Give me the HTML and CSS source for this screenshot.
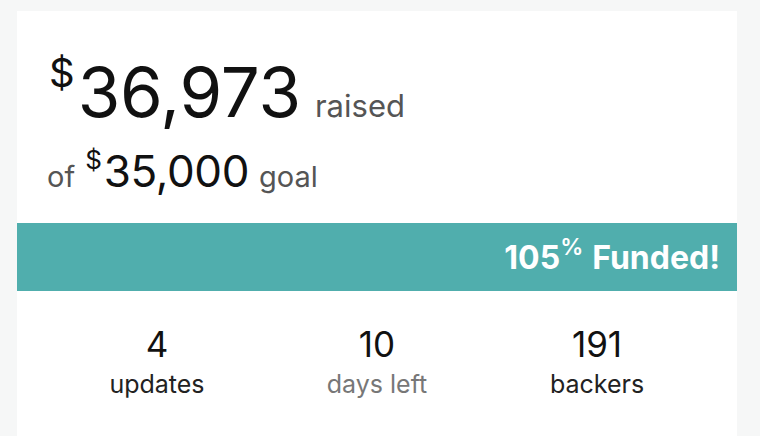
FILE: index.html
```html
<!DOCTYPE html>
<html>
<head>
<meta charset="utf-8">
<link rel="stylesheet" href="styles.css">
</head>
<body>
<div class="card">
  <div class="amounts">
    <div class="raised-line">
      <span class="cur-big">$</span><span class="big">36,973</span><span class="word-big">raised</span>
    </div>
    <div class="goal-line">
      <span class="word">of</span><span class="cur-small">$</span><span class="mid">35,000</span><span class="word">goal</span>
    </div>
  </div>
  <div class="bar">
    <span class="pct">105</span><span class="pct-sign">%</span><span class="funded">Funded!</span>
  </div>
  <div class="stats">
    <div class="stat"><div class="num">4</div><div class="label">updates</div></div>
    <div class="stat"><div class="num">10</div><div class="label muted">days left</div></div>
    <div class="stat"><div class="num">191</div><div class="label">backers</div></div>
  </div>
</div>
</body>
</html>
```
FILE: styles.css
```css
html, body {
  margin: 0;
  padding: 0;
  background: #f6f7f7;
  font-family: Inter, "Noto Sans", sans-serif;
  color: #111;
}
.card {
  margin: 11px 0 0 17px;
  width: 720px;
  height: 425px;
  background: #fff;
}
.amounts {
  padding: 40px 0 0 32px;
  height: 212px;
  box-sizing: border-box;
}
.raised-line {
  display: flex;
  align-items: baseline;
  height: 82px;
}
.cur-big {
  font-size: 40px;
  line-height: 40px;
  align-self: flex-start;
  margin-top: 2px;
  margin-right: 3px;
}
.big {
  font-size: 69px;
  line-height: 82px;
  letter-spacing: -0.2px;
}
.word-big {
  font-size: 31px;
  color: #555;
  margin-left: 14px;
}
.goal-line {
  display: flex;
  align-items: baseline;
  margin-top: 10px;
  margin-left: -2px;
}
.word {
  font-size: 29px;
  color: #555;
}
.cur-small {
  font-size: 26px;
  line-height: 26px;
  align-self: flex-start;
  margin-top: 4px;
  margin-left: 10px;
  margin-right: 2px;
}
.mid {
  font-size: 44px;
  line-height: 56px;
  margin-right: 10px;
  letter-spacing: -0.4px;
}
.bar {
  height: 68px;
  background: #50aead;
  color: #fff;
  display: flex;
  align-items: baseline;
  justify-content: flex-end;
  padding: 0 17px 0 0;
  box-sizing: border-box;
  font-weight: 700;
  line-height: 70px;
}
.pct { font-size: 32px; }
.pct-sign {
  font-size: 23px;
  font-weight: 600;
  align-self: flex-start;
  line-height: 1;
  margin-top: 13px;
  margin-right: 9px;
}
.funded { font-size: 32px; }
.stats {
  display: grid;
  grid-template-columns: repeat(3, 1fr);
  padding: 32px 30px 0;
}
.stat {
  text-align: center;
}
.num {
  font-size: 35px;
  line-height: 42px;
  color: #111;
}
.label {
  font-size: 25px;
  line-height: 38px;
  color: #222;
}
.label.muted { color: #777; }
```
